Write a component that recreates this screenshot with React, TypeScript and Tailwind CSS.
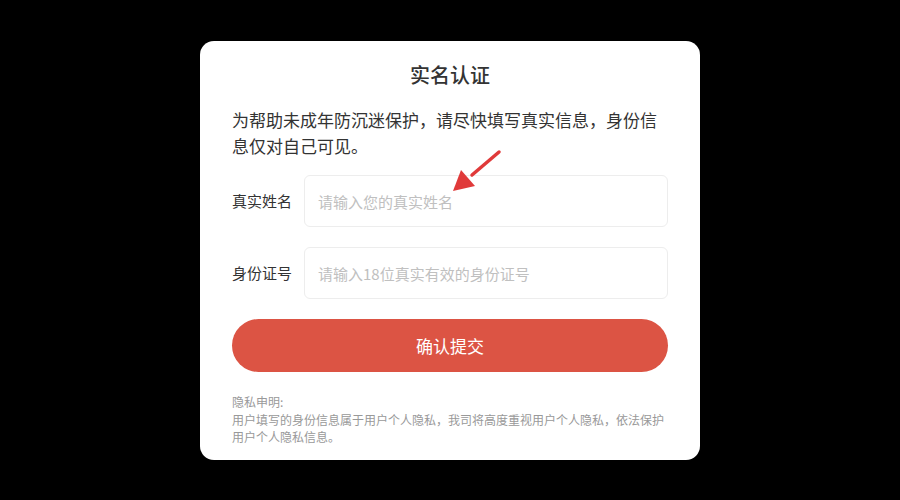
const font = { fontFamily: '"Noto Sans CJK SC", "Noto Sans", sans-serif' };

function Field({ label, placeholder }: { label: string; placeholder: string }) {
  return (
    <div className="flex items-center">
      <label className="w-[72px] shrink-0 text-[15px] text-[#333]">{label}</label>
      <input
        placeholder={placeholder}
        className="h-[52px] flex-1 rounded-[6px] border border-[#ededed] bg-white px-[13px] text-[15px] text-[#333] outline-none placeholder:text-[#c0c0c0]"
      />
    </div>
  );
}

export default function App() {
  return (
    <div className="flex h-[500px] w-[900px] items-start justify-center bg-black pt-[41px]" style={font}>
      <div className="relative w-[500px] rounded-[14px] bg-white px-[32px] pb-[14px] pt-[18px]">
        <h1 className="text-center text-[20px] font-medium leading-[32px] text-[#333]">实名认证</h1>
        <p className="mt-[16px] break-all text-[17px] leading-[26px] text-[#333]">
          为帮助未成年防沉迷保护，请尽快填写真实信息，身份信息仅对自己可见。
        </p>
        <div className="mt-[16px] flex flex-col gap-[20px]">
          <Field label="真实姓名" placeholder="请输入您的真实姓名" />
          <Field label="身份证号" placeholder="请输入18位真实有效的身份证号" />
        </div>
        <button className="mt-[20px] h-[53px] w-full rounded-full bg-[#dc5444] text-[17px] text-white">
          确认提交
        </button>
        <div className="mt-[21px] break-all text-[12px] leading-[17.5px] text-[#999]">
          <p>隐私申明:</p>
          <p>用户填写的身份信息属于用户个人隐私，我司将高度重视用户个人隐私，依法保护用户个人隐私信息。</p>
        </div>
        {/* annotation arrow */}
        <svg className="pointer-events-none absolute left-[250px] top-[108px]" width="52" height="46" viewBox="0 0 52 46">
          <line x1="49" y1="3" x2="22" y2="26" stroke="#e03a3a" strokeWidth="3.5" strokeLinecap="round" />
          <polygon points="3,42 11,21 25,37" fill="#e03a3a" />
        </svg>
      </div>
    </div>
  );
}
